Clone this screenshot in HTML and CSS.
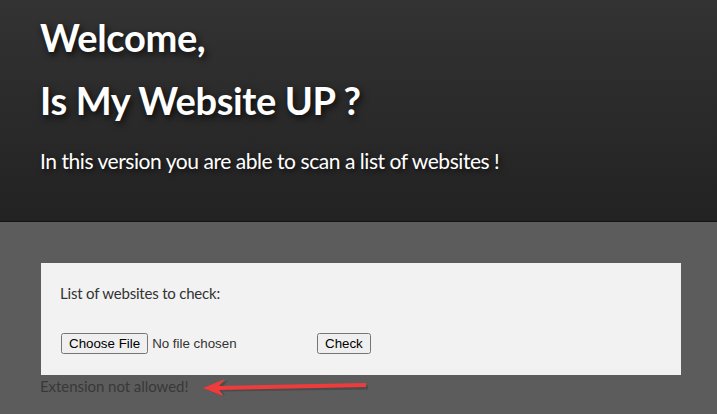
FILE: index.html
```html
<!DOCTYPE html>
<html>
<head>
<meta charset="utf-8">
<link rel="stylesheet" href="styles.css">
</head>
<body>
<header class="hero">
  <h1 class="title">Welcome,</h1>
  <h1 class="title">Is My Website UP ?</h1>
  <p class="lead">In this version you are able to scan a list of websites !</p>
</header>
<main class="content">
  <form class="card">
    <label class="label">List of websites to check:</label>
    <div class="row">
      <input type="file" class="file">
      <button type="button" class="btn">Check</button>
    </div>
  </form>
  <div class="msg-wrap">
    <p class="msg">Extension not allowed!</p>
    <svg class="arrow" width="180" height="24" viewBox="0 0 180 24">
      <g transform="translate(1,1.5)" fill="#2a2a2a" opacity="0.35">
        <polygon points="4,12 26,3 20,10 166,8 166,12 20,14 26,21"/>
      </g>
      <polygon fill="#ee3c3c" points="2,12 24,3 18,10 165,7 165,11 18,14 24,21"/>
    </svg>
  </div>
</main>
</body>
</html>
```
FILE: styles.css
```css
html, body {
  margin: 0;
  padding: 0;
}
body {
  background: #5d5c5d;
  font-family: Lato, "Open Sans", sans-serif;
  overflow: hidden;
}
.hero {
  background: linear-gradient(to bottom, #333333, #222222);
  border-bottom: 1px solid #111;
  height: 221px;
  padding: 0 40px;
  box-sizing: content-box;
}
.title {
  margin: 0;
  color: #fff;
  font-size: 38px;
  font-weight: 700;
  line-height: 63px;
  letter-spacing: -0.35px;
  text-shadow: 2px 3px 7px rgba(0,0,0,0.8);
}
.hero .title:first-child {
  padding-top: 6px;
}
.lead {
  margin: 0;
  padding-top: 16px;
  color: #fff;
  font-size: 21px;
  line-height: 25px;
  letter-spacing: -0.45px;
  text-shadow: 2px 2px 5px rgba(0,0,0,0.75);
}
.content {
  padding: 41px 36px 0 41px;
}
.card {
  background: #f2f2f2;
  height: 112px;
  padding: 0 19px;
  display: flex;
  flex-direction: column;
}
.label {
  color: #333;
  font-size: 15px;
  letter-spacing: -0.2px;
  margin-top: 21px;
  line-height: 18px;
}
.row {
  margin-top: 31px;
  display: flex;
  align-items: center;
  gap: 4px;
}
.file {
  font-family: "Liberation Sans", Arial, sans-serif;
  font-size: 13.33px;
  color: #333;
  width: 252px;
  margin: 0 0 0 1px;
}
.btn {
  font-family: "Liberation Sans", Arial, sans-serif;
  font-size: 13.33px;
  margin: 0;
}
.msg-wrap {
  position: relative;
}
.msg {
  margin: 0;
  margin-left: -1px;
  padding-top: 2px;
  color: #383838;
  font-size: 15px;
  letter-spacing: -0.05px;
  line-height: 18px;
}
.arrow {
  position: absolute;
  left: 160px;
  top: 1px;
}
```
